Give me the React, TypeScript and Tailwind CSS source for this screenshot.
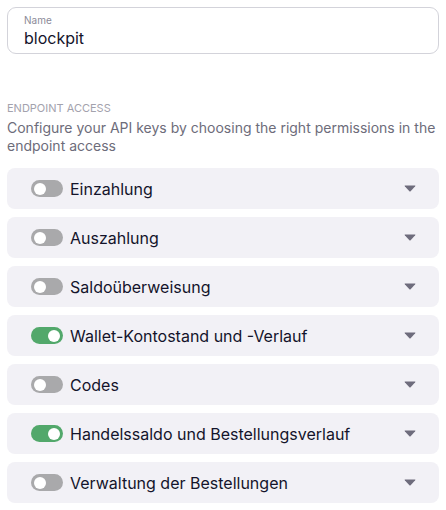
import React from "react";

const items: { label: string; on: boolean }[] = [
  { label: "Einzahlung", on: false },
  { label: "Auszahlung", on: false },
  { label: "Saldoüberweisung", on: false },
  { label: "Wallet-Kontostand und -Verlauf", on: true },
  { label: "Codes", on: false },
  { label: "Handelssaldo und Bestellungsverlauf", on: true },
  { label: "Verwaltung der Bestellungen", on: false },
];

function Toggle({ on }: { on: boolean }) {
  return (
    <div
      className={
        on
          ? "flex h-[17px] w-[32px] shrink-0 items-center justify-end rounded-full bg-[#52a86b] px-[3px]"
          : "flex h-[17px] w-[32px] shrink-0 items-center justify-start rounded-full bg-[#a9a9ab] px-[3px]"
      }
    >
      <div className="h-[12px] w-[12px] rounded-full bg-white" />
    </div>
  );
}

function Caret() {
  return (
    <svg width="12" height="7" viewBox="0 0 12 7" className="shrink-0">
      <path d="M1 0.5 L11 0.5 Q11.8 0.5 11.2 1.2 L6.6 6.2 Q6 6.8 5.4 6.2 L0.8 1.2 Q0.2 0.5 1 0.5 Z" fill="#6e6c7c" />
    </svg>
  );
}

export default function App() {
  return (
    <div className="w-[446px] min-h-[510px] bg-white px-[7px] pt-[7px] font-['Inter',sans-serif]">
      <div className="flex h-[47px] flex-col justify-center rounded-[9px] border border-[#d3d3da] px-[16px]">
        <div className="text-[10px] leading-[12px] text-[#8b8a98]">Name</div>
        <div className="mt-[2px] text-[16px] leading-[20px] text-[#14142b]">blockpit</div>
      </div>
      <div className="mt-[47px] text-[11px] leading-[14px] uppercase text-[#a3a2ad]">Endpoint access</div>
      <div className="mt-[4px] text-[14px] leading-[18px] text-[#6d6c7a]">
        Configure your API keys by choosing the right permissions in the endpoint access
      </div>
      <div className="mt-[13px] flex flex-col gap-[8px]">
        {items.map((it) => (
          <div
            key={it.label}
            className="flex h-[41px] items-center rounded-[8px] bg-[#f2f1f6] pl-[24px] pr-[23px]"
          >
            <Toggle on={it.on} />
            <span className="ml-[7px] flex-1 text-[16px] text-[#14142b]">{it.label}</span>
            <Caret />
          </div>
        ))}
      </div>
    </div>
  );
}
